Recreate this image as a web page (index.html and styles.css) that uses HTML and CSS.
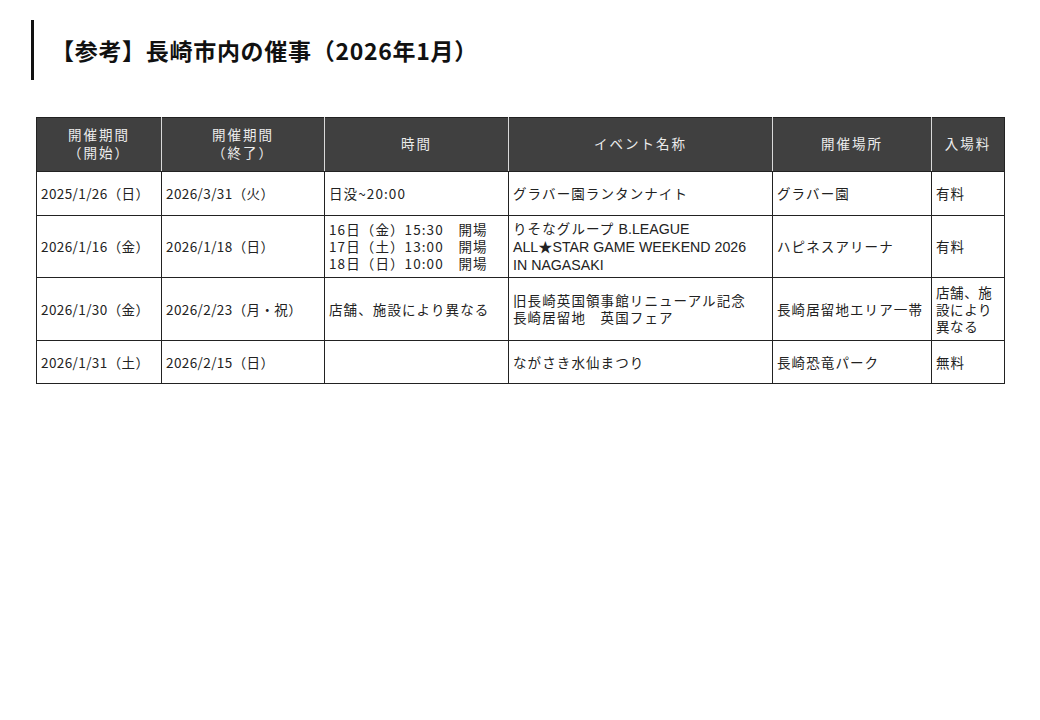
FILE: index.html
```html
<!DOCTYPE html>
<html lang="ja">
<head>
<meta charset="utf-8">
<link rel="stylesheet" href="styles.css">
</head>
<body>
<div class="page">
  <h1 class="title">【参考】長崎市内の催事（2026年1月）</h1>
  <table class="events">
    <colgroup>
      <col class="c1"><col class="c2"><col class="c3"><col class="c4"><col class="c5"><col class="c6">
    </colgroup>
    <thead>
      <tr class="head">
        <th>開催期間<br>（開始）</th>
        <th>開催期間<br>（終了）</th>
        <th>時間</th>
        <th>イベント名称</th>
        <th>開催場所</th>
        <th>入場料</th>
      </tr>
    </thead>
    <tbody>
      <tr class="r1">
        <td class="date">2025/1/26（日）</td>
        <td class="date">2026/3/31（火）</td>
        <td>日没~20:00</td>
        <td>グラバー園ランタンナイト</td>
        <td>グラバー園</td>
        <td>有料</td>
      </tr>
      <tr class="r2">
        <td class="date">2026/1/16（金）</td>
        <td class="date">2026/1/18（日）</td>
        <td>16日（金）15:30　開場<br>17日（土）13:00　開場<br>18日（日）10:00　開場</td>
        <td>りそなグループ <span class="latin">B.LEAGUE<br>ALL★STAR GAME WEEKEND 2026<br>IN NAGASAKI</span></td>
        <td>ハピネスアリーナ</td>
        <td>有料</td>
      </tr>
      <tr class="r3">
        <td class="date">2026/1/30（金）</td>
        <td class="date">2026/2/23（月・祝）</td>
        <td>店舗、施設により異なる</td>
        <td>旧長崎英国領事館リニューアル記念<br>長崎居留地　英国フェア</td>
        <td>長崎居留地エリア一帯</td>
        <td class="fee">店舗、施設により異なる</td>
      </tr>
      <tr class="r4">
        <td class="date">2026/1/31（土）</td>
        <td class="date">2026/2/15（日）</td>
        <td></td>
        <td>ながさき水仙まつり</td>
        <td>長崎恐竜パーク</td>
        <td>無料</td>
      </tr>
    </tbody>
  </table>
</div>
</body>
</html>
```
FILE: styles.css
```css
html, body {
  margin: 0;
  padding: 0;
  background: #ffffff;
}
body {
  font-family: "Noto Sans CJK JP", "Noto Sans", sans-serif;
  color: #222;
}
.page {
  padding: 20px 0 0 31px;
}
.title {
  margin: 0;
  height: 60px;
  display: flex;
  align-items: center;
  border-left: 3px solid #111;
  padding-left: 17px;
  font-size: 23px;
  font-weight: bold;
  color: #111;
  letter-spacing: 0.7px;
}
.events {
  margin: 37px 0 0 5px;
  border-collapse: collapse;
  table-layout: fixed;
  width: 968px;
  font-size: 13.5px;
}
.c1 { width: 125px; }
.c2 { width: 163px; }
.c3 { width: 184px; }
.c4 { width: 264px; }
.c5 { width: 159px; }
.c6 { width: 73px; }
.events th, .events td {
  border: 1px solid #222;
  vertical-align: middle;
  line-height: 17px;
  padding: 0 4px;
}
.events td {
  text-align: left;
  font-weight: normal;
  letter-spacing: 1.1px;
}
.events td.date {
  letter-spacing: 0.4px;
}
.events td.fee {
  letter-spacing: 0.6px;
  padding-right: 2px;
}
.events th {
  background: #404040;
  color: #ececec;
  font-weight: normal;
  text-align: center;
  letter-spacing: 2px;
  line-height: 18px;
  padding-bottom: 3px;
  border-left-color: #d9d9d9;
  border-right-color: #d9d9d9;
  border-top-color: #222;
}
.events th:first-child { border-left-color: #222; }
.events th:last-child { border-right-color: #222; }
.head { height: 54px; }
.r1 { height: 44px; }
.r2 { height: 62px; }
.r3 { height: 63px; }
.r4 { height: 43px; }
.latin {
  font-family: "Liberation Sans", "Noto Sans CJK JP", sans-serif;
  font-size: 14.2px;
  letter-spacing: 0;
}
```
